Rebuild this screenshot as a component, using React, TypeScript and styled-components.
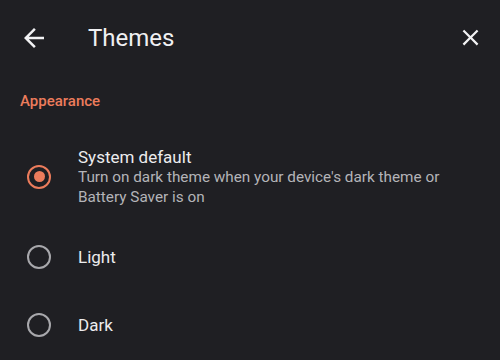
import React, {useState} from "react";
import styled, {createGlobalStyle} from "styled-components";

const Global = createGlobalStyle`
  html, body {
    margin: 0;
    padding: 0;
    background: #1f1f23;
  }
  body {
    font-family: Roboto, "Noto Sans", sans-serif;
    color: #e8e8ea;
  }
`

const Page = styled.div`
  width: 500px;
  height: 360px;
  background: #1f1f23;
  overflow: hidden;
`
const Header = styled.div`
  height: 75px;
  display: flex;
  align-items: center;
  padding: 0 16px 0 19px;
`
const IconButton = styled.div<{ $size: number }>`
  width: ${p => p.$size}px;
  height: ${p => p.$size}px;
  display: flex;
  align-items: center;
  justify-content: center;
  color: #f2f2f4;
  > svg {
    width: 100%;
    height: 100%;
  }
`
const Title = styled.h1`
  flex: 1;
  margin: 0 0 0 39px;
  font-size: 24px;
  font-weight: 400;
  color: #f0f0f2;
`
const SectionTitle = styled.div`
  margin: 16px 0 19px 20px;
  font-size: 15px;
  line-height: 20px;
  font-weight: 500;
  color: #ec7c5c;
`
const Row = styled.div`
  display: flex;
  align-items: center;
  gap: 27px;
  min-height: 68px;
  box-sizing: border-box;
  padding: 16px 20px 16px 27px;
  cursor: pointer;
`
const Radio = styled.div<{ $checked: boolean }>`
  flex: none;
  width: 24px;
  height: 24px;
  box-sizing: border-box;
  border-radius: 50%;
  border: 2.5px solid ${p => p.$checked ? '#ec7c5c' : '#a8a8ac'};
  display: flex;
  align-items: center;
  justify-content: center;
  &::after {
    content: '';
    width: 11px;
    height: 11px;
    border-radius: 50%;
    background: ${p => p.$checked ? '#ec7c5c' : 'transparent'};
  }
`
const Texts = styled.div`
  display: flex;
  flex-direction: column;
`
const Label = styled.div`
  font-size: 17px;
  line-height: 22px;
  color: #ececee;
`
const Sub = styled.div`
  font-size: 15.3px;
  line-height: 19.5px;
  color: #b4b4b8;
`

const options = [
    {key: 'system', label: 'System default', sub: "Turn on dark theme when your device's dark theme or Battery Saver is on"},
    {key: 'light', label: 'Light'},
    {key: 'dark', label: 'Dark'},
]

const App = () => {
    const [value, setValue] = useState('system')
    return (
        <Page>
            <Global/>
            <Header>
                <IconButton $size={30}>
                    <svg viewBox="0 0 24 24" fill="currentColor">
                        <path d="M20 11H7.83l5.59-5.59L12 4l-8 8 8 8 1.41-1.41L7.83 13H20v-2z"/>
                    </svg>
                </IconButton>
                <Title>Themes</Title>
                <IconButton $size={27}>
                    <svg viewBox="0 0 24 24" fill="currentColor">
                        <path d="M19 6.41L17.59 5 12 10.59 6.41 5 5 6.41 10.59 12 5 17.59 6.41 19 12 13.41 17.59 19 19 17.59 13.41 12z"/>
                    </svg>
                </IconButton>
            </Header>
            <SectionTitle>Appearance</SectionTitle>
            {options.map(o =>
                <Row key={o.key} onClick={() => setValue(o.key)}>
                    <Radio $checked={value === o.key}/>
                    <Texts>
                        <Label>{o.label}</Label>
                        {o.sub && <Sub>{o.sub}</Sub>}
                    </Texts>
                </Row>
            )}
        </Page>
    );
}

export default App;
